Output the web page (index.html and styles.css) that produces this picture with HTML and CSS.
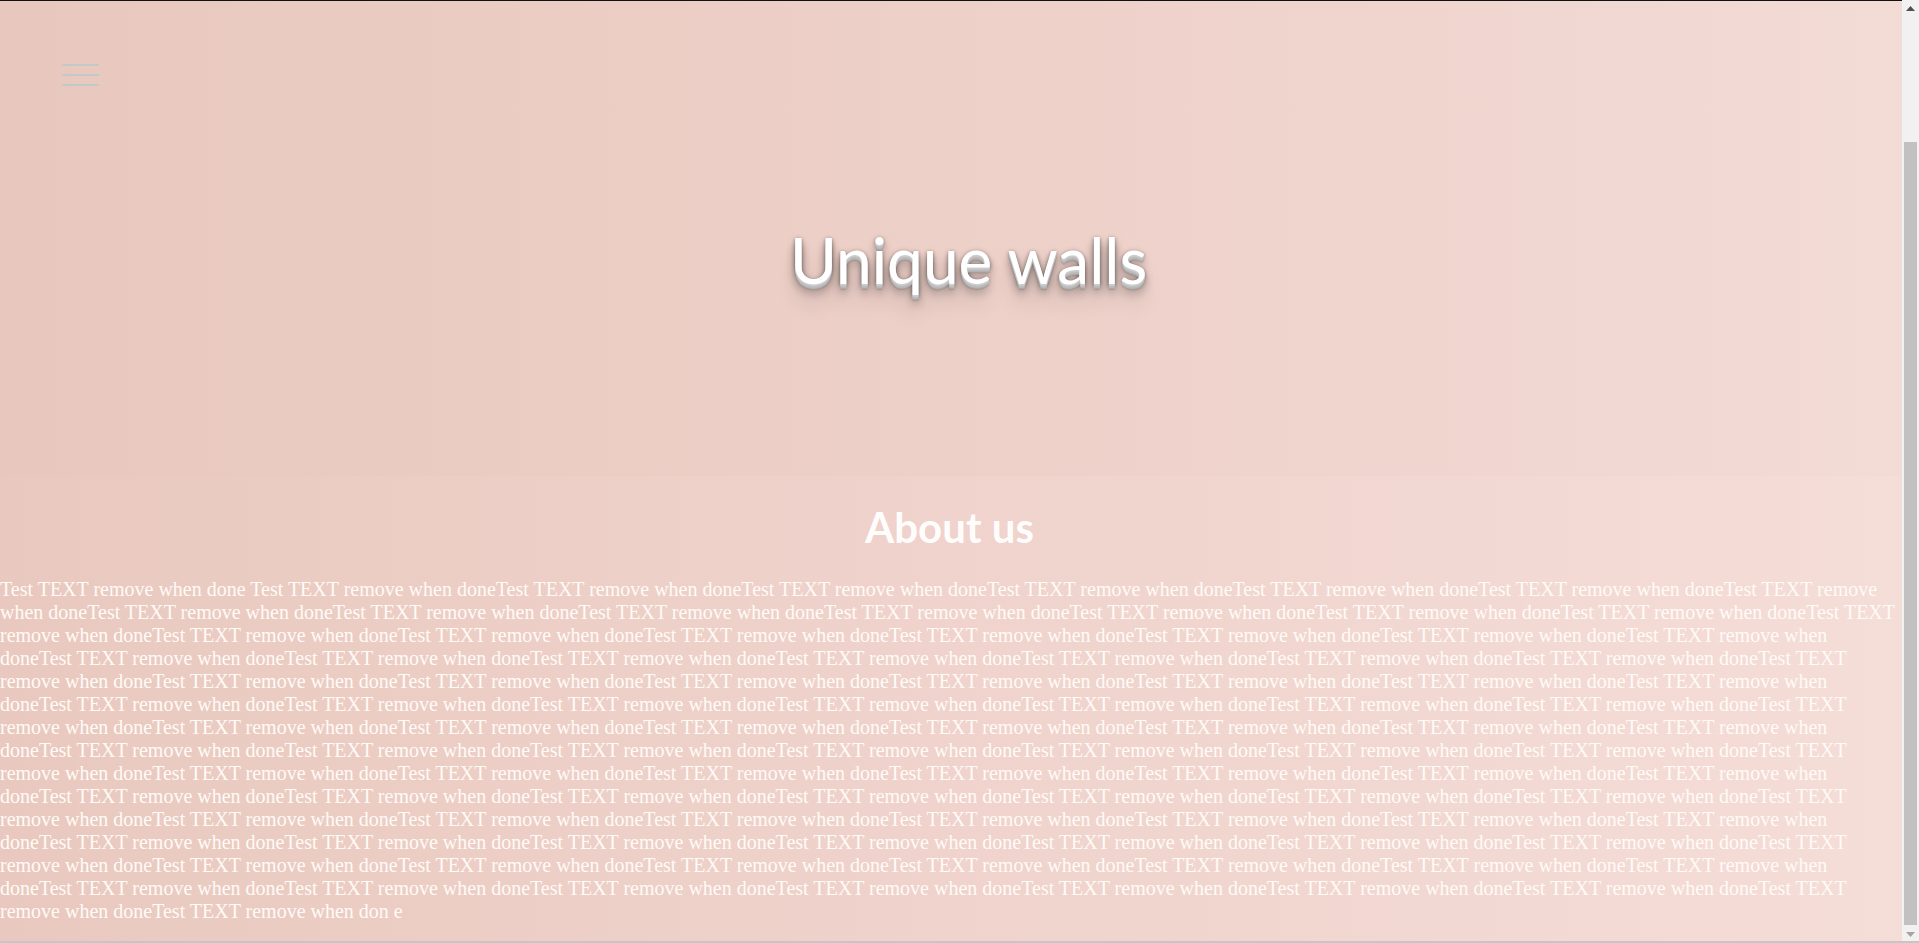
FILE: index.html
```html
<!DOCTYPE html>
<html lang="en">
<head>
<meta charset="utf-8">
<title>Unique walls</title>
<link rel="stylesheet" href="styles.css">
</head>
<body>
<header class="site-header">
  <button class="menu-toggle" aria-label="Menu"><span></span><span></span><span></span></button>
</header>
<section class="hero">
  <h1 class="hero-title">Unique walls</h1>
</section>
<section class="about">
  <h2 class="about-title">About us</h2>
  <p class="about-text">Test TEXT remove when done <!--
-->Test TEXT remove when doneTest TEXT remove when doneTest TEXT remove when doneTest TEXT remove when doneTest TEXT remove when done<!--
-->Test TEXT remove when doneTest TEXT remove when doneTest TEXT remove when doneTest TEXT remove when doneTest TEXT remove when done<!--
-->Test TEXT remove when doneTest TEXT remove when doneTest TEXT remove when doneTest TEXT remove when doneTest TEXT remove when done<!--
-->Test TEXT remove when doneTest TEXT remove when doneTest TEXT remove when doneTest TEXT remove when doneTest TEXT remove when done<!--
-->Test TEXT remove when doneTest TEXT remove when doneTest TEXT remove when doneTest TEXT remove when doneTest TEXT remove when done<!--
-->Test TEXT remove when doneTest TEXT remove when doneTest TEXT remove when doneTest TEXT remove when doneTest TEXT remove when done<!--
-->Test TEXT remove when doneTest TEXT remove when doneTest TEXT remove when doneTest TEXT remove when doneTest TEXT remove when done<!--
-->Test TEXT remove when doneTest TEXT remove when doneTest TEXT remove when doneTest TEXT remove when doneTest TEXT remove when done<!--
-->Test TEXT remove when doneTest TEXT remove when doneTest TEXT remove when doneTest TEXT remove when doneTest TEXT remove when done<!--
-->Test TEXT remove when doneTest TEXT remove when doneTest TEXT remove when doneTest TEXT remove when doneTest TEXT remove when done<!--
-->Test TEXT remove when doneTest TEXT remove when doneTest TEXT remove when doneTest TEXT remove when doneTest TEXT remove when done<!--
-->Test TEXT remove when doneTest TEXT remove when doneTest TEXT remove when doneTest TEXT remove when doneTest TEXT remove when done<!--
-->Test TEXT remove when doneTest TEXT remove when doneTest TEXT remove when doneTest TEXT remove when doneTest TEXT remove when done<!--
-->Test TEXT remove when doneTest TEXT remove when doneTest TEXT remove when doneTest TEXT remove when doneTest TEXT remove when done<!--
-->Test TEXT remove when doneTest TEXT remove when doneTest TEXT remove when doneTest TEXT remove when doneTest TEXT remove when done<!--
-->Test TEXT remove when doneTest TEXT remove when doneTest TEXT remove when doneTest TEXT remove when doneTest TEXT remove when done<!--
-->Test TEXT remove when doneTest TEXT remove when doneTest TEXT remove when doneTest TEXT remove when doneTest TEXT remove when done<!--
-->Test TEXT remove when doneTest TEXT remove when doneTest TEXT remove when doneTest TEXT remove when doneTest TEXT remove when done<!--
-->Test TEXT remove when doneTest TEXT remove when doneTest TEXT remove when doneTest TEXT remove when doneTest TEXT remove when done<!--
-->Test TEXT remove when doneTest TEXT remove when doneTest TEXT remove when doneTest TEXT remove when doneTest TEXT remove when done<!--
-->Test TEXT remove when doneTest TEXT remove when doneTest TEXT remove when doneTest TEXT remove when doneTest TEXT remove when done<!--
-->Test TEXT remove when don e</p>
</section>
<div class="scrollbar" aria-hidden="true">
  <div class="scrollbar-btn">
    <svg width="9" height="5" viewBox="0 0 9 5"><polygon points="4.5,0 9,5 0,5" fill="#505050"/></svg>
  </div>
  <div class="scrollbar-track"><div class="scrollbar-thumb"></div></div>
  <div class="scrollbar-btn">
    <svg width="9" height="5" viewBox="0 0 9 5"><polygon points="0,0 9,0 4.5,5" fill="#a3a3a3"/></svg>
  </div>
</div>
<div class="window-edge" aria-hidden="true"></div>
<script src="script.js"></script>
</body>
</html>
```

FILE: styles.css
```css
html, body {
  margin: 0;
  padding: 0;
}

body {
  font-family: Lato, "Open Sans", sans-serif;
  background: #eccfc7;
}

.site-header {
  position: fixed;
  top: 0;
  left: 0;
  right: 0;
  height: 0;
  border-top: 1px solid #111;
  z-index: 10;
}

.menu-toggle {
  position: absolute;
  top: 63px;
  left: 62px;
  width: 37px;
  padding: 0;
  border: 0;
  background: none;
  display: flex;
  flex-direction: column;
  gap: 8px;
  cursor: pointer;
}

.menu-toggle span {
  display: block;
  height: 2px;
  background: #c3c8c9;
}

.hero {
  height: 625px;
  box-sizing: border-box;
  padding: 369px 0 0 18px;
  text-align: center;
  background: linear-gradient(to right, #e8c8be 0%, #edd0c8 50%, #f3dbd6 100%);
}

.hero-title {
  margin: 0;
  font-family: Lato, "Open Sans", sans-serif;
  font-weight: 400;
  font-size: 64px;
  line-height: 80px;
  color: #ffffff;
  text-shadow:
    0 1px 0 #cccccc,
    0 2px 0 #c9c9c9,
    0 3px 0 #bbbbbb,
    0 4px 0 #b9b9b9,
    0 5px 0 #aaaaaa,
    0 6px 1px rgba(0, 0, 0, 0.1),
    0 0 5px rgba(0, 0, 0, 0.1),
    0 1px 3px rgba(0, 0, 0, 0.3),
    0 3px 5px rgba(0, 0, 0, 0.2),
    0 5px 10px rgba(0, 0, 0, 0.25),
    0 10px 10px rgba(0, 0, 0, 0.2),
    0 20px 20px rgba(0, 0, 0, 0.15);
}

.about {
  padding: 26px 0 20px;
  background: linear-gradient(to right, #e9c9bf 0%, #efd3cc 50%, #f5ddd8 100%);
}

.about-title {
  margin: 0 0 26px;
  padding-right: 20px;
  text-align: center;
  font-family: Lato, "Open Sans", sans-serif;
  font-weight: 700;
  font-size: 42px;
  line-height: 50px;
  color: #fffdfc;
}

.about-text {
  margin: 0;
  max-width: 1897px;
  font-family: "Liberation Serif", "Times New Roman", serif;
  font-size: 20px;
  line-height: 23px;
  color: #fffaf6;
}

.scrollbar {
  position: fixed;
  top: 0;
  right: 0;
  bottom: 0;
  width: 17px;
  background: #f1f1f1;
  display: flex;
  flex-direction: column;
  z-index: 20;
}

.scrollbar-btn {
  flex: 0 0 17px;
  display: flex;
  align-items: center;
  justify-content: center;
}

.scrollbar-btn svg {
  display: block;
}

.scrollbar-track {
  flex: 1;
  display: flex;
  flex-direction: column;
  padding: 125px 2px 1px;
}

.scrollbar-thumb {
  flex: 1;
  background: #c1c1c1;
}

.window-edge {
  position: fixed;
  left: 0;
  right: 0;
  bottom: 0;
  height: 2px;
  background: #c6c6c6;
  z-index: 30;
}
```

FILE: script.js
```js
function scrollToEnd() {
  window.scrollTo(0, document.documentElement.scrollHeight);
}
scrollToEnd();
window.addEventListener('load', scrollToEnd);
```
